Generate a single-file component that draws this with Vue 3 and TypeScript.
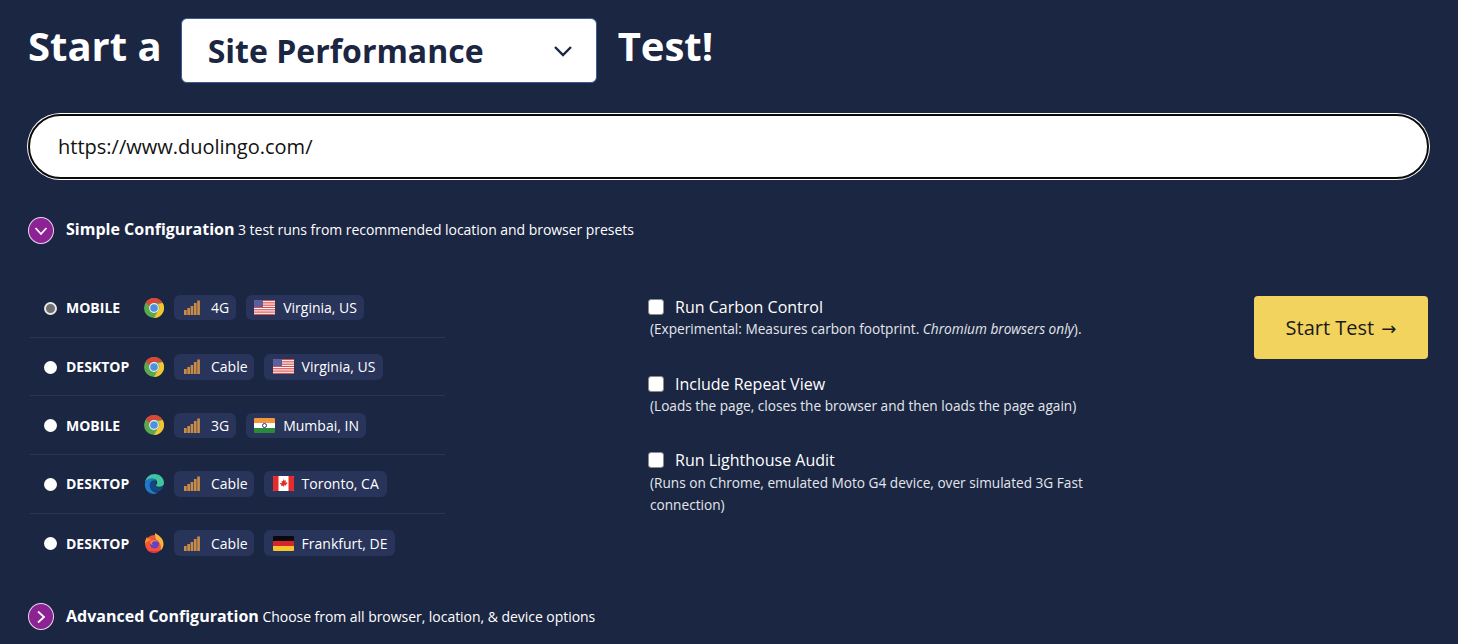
<script setup lang="ts">
type Row = { device: string; browser: 'chrome' | 'edge' | 'firefox'; net: string; flag: 'us' | 'in' | 'ca' | 'de'; place: string; checked?: boolean };
const rows: Row[] = [
  { device: 'MOBILE', browser: 'chrome', net: '4G', flag: 'us', place: 'Virginia, US', checked: true },
  { device: 'DESKTOP', browser: 'chrome', net: 'Cable', flag: 'us', place: 'Virginia, US' },
  { device: 'MOBILE', browser: 'chrome', net: '3G', flag: 'in', place: 'Mumbai, IN' },
  { device: 'DESKTOP', browser: 'edge', net: 'Cable', flag: 'ca', place: 'Toronto, CA' },
  { device: 'DESKTOP', browser: 'firefox', net: 'Cable', flag: 'de', place: 'Frankfurt, DE' },
];
const bars = [5, 7, 9, 12, 14.5];
const stripes = [0, 2.3, 4.6, 6.9, 9.2, 11.5, 13.8];
</script>

<template>
  <main class="page">
    <h1 class="title">
      <span>Start a</span>
      <span class="select">
        <span>Site Performance</span>
        <svg class="caret" width="20" height="12" viewBox="0 0 20 12"><path d="M2 2l8 8 8-8" fill="none" stroke="#1b2642" stroke-width="2.400" /></svg>
      </span>
      <span>Test!</span>
    </h1>

    <div class="url"><span>https://www.duolingo.com/</span></div>

    <div class="section simple">
      <span class="toggle">
        <svg width="14" height="14" viewBox="0 0 14 14"><path d="M1.500 4l5.500 6 5.500-6" fill="none" stroke="#fff" stroke-width="1.800" /></svg>
      </span>
      <p><b>Simple Configuration</b> 3 test runs from recommended location and browser presets</p>
    </div>

    <div class="options">
      <div class="presets">
        <label v-for="(r, i) in rows" :key="i" class="row" :class="{ desktop: r.device === 'DESKTOP' }">
          <input class="radio" type="radio" name="preset" :checked="r.checked" />
          <b class="device">{{ r.device }}</b>
          <svg v-if="r.browser === 'chrome'" class="browser" viewBox="0 0 20 20">
            <circle cx="10" cy="10" r="10" fill="#5aa84f" />
            <path d="M10 0a10 10 0 0 1 8.700 5H10a5 5 0 0 0-4.600 3L1.600 4.600A10 10 0 0 1 10 0z" fill="#d8473a" />
            <path d="M18.700 5a10 10 0 0 1-8.700 15l4.300-7.500A5 5 0 0 0 14 6.200z" fill="#f2c531" />
            <circle cx="10" cy="10" r="4.900" fill="#e8eef5" />
            <circle cx="10" cy="10" r="3.800" fill="#4f8fdc" />
          </svg>
          <svg v-else-if="r.browser === 'edge'" class="browser" viewBox="0 0 20 20">
            <path d="M1 8.500C2 3 6 0 10.500 0 16 0 20 4 20 9c0 2.500-2 3.800-4.500 3.800-2 0-3.500-.6-3.500-1.600 0-.8 1.200-1 1.200-2.700C13.200 6 11 4.500 8 4.800 4.500 5.200 1.800 6.500 1 8.500z" fill="#3fc5a0" />
            <path d="M1 8.500C2 5.500 5 4.200 8 4.500c2 .2 4 1.300 4.300 2.500-3-1.200-6.500.5-6.500 4.200 0 4 4 8 8.200 7.300A10 10 0 0 1 10 20C4 20 0 15 1 8.500z" fill="#1f78c8" />
            <path d="M5.800 11.200c0-2.600 3-4.600 6-4 .6 1-.2 2-.2 3 0 2 2 3 4 3 1.600 0 3.200-.6 4.200-1.800-.5 2.800-3 5.600-5.800 6.300-4.200.7-8.200-2.500-8.200-6.500z" fill="#14467f" />
          </svg>
          <svg v-else class="browser" viewBox="0 0 20 20">
            <circle cx="10" cy="11" r="9" fill="#f0562f" />
            <path d="M11 0c5 3 8.500 6 8.500 11 0 2-1 5-3 6.500C18 13 16 9 12 7c0-2.500-1.500-4-1-7z" fill="#fcb53b" />
            <path d="M1 11C1 8 1.500 6 3 4l1 2c1-.5 2-.5 3 0-1 2-4 2-6 5z" fill="#ff8a30" />
            <circle cx="10.500" cy="11" r="4.500" fill="#6a3fc8" />
            <path d="M6 9c2-3 6-3 8 0-2-1-5-1-6 1-.5 1 .5 2 2 2-2 .5-4-1-4-3z" fill="#f7823a" />
            <path d="M3 17c3 3 9 4 13 .5-4 1-10 1-13-.5z" fill="#e3265f" />
          </svg>
          <span class="pill">
            <svg class="bars" viewBox="0 0 16 15">
              <rect v-for="(h, b) in bars" :key="b" :x="b * 3.3" :y="15 - h" width="2.700" :height="h" fill="#c88c48" />
            </svg>
            <span>{{ r.net }}</span>
          </span>
          <span class="pill place">
            <svg class="flag" viewBox="0 0 21 15">
              <template v-if="r.flag === 'us'">
                <rect width="21" height="15" rx="1" fill="#fff" />
                <rect v-for="y in stripes" :key="y" :y="y" width="21" height="1.150" fill="#d94a4a" />
                <rect width="9" height="7" fill="#5b5f9e" />
              </template>
              <template v-else-if="r.flag === 'in'">
                <rect width="21" height="5" fill="#f4963a" />
                <rect y="5" width="21" height="5" fill="#fff" />
                <rect y="10" width="21" height="5" fill="#2a8a3a" />
                <circle cx="10.500" cy="7.500" r="2" fill="none" stroke="#1f2f8a" stroke-width="1" />
              </template>
              <template v-else-if="r.flag === 'ca'">
                <rect width="21" height="15" fill="#fff" />
                <rect width="5.500" height="15" fill="#e62b2b" />
                <rect x="15.500" width="5.500" height="15" fill="#e62b2b" />
                <path d="M10.500 3l1 1.800 1.500-.5-.5 2.500 1.500-.5.500 1-1.500 1.300.3 1-2.300-.3v1.700h-.5V9.800l-2.300.3.300-1L7 7.800l.5-1 1.500.5-.5-2.500 1.500.5z" fill="#e62b2b" />
              </template>
              <template v-else>
                <rect width="21" height="5" fill="#0a0a0a" />
                <rect y="5" width="21" height="5" fill="#d8232a" />
                <rect y="10" width="21" height="5" fill="#f5c62c" />
              </template>
            </svg>
            <span>{{ r.place }}</span>
          </span>
        </label>
      </div>

      <div class="checks">
        <div class="check">
          <label><input type="checkbox" /><span>Run Carbon Control</span></label>
          <small>(Experimental: Measures carbon footprint. <em>Chromium browsers only</em>).</small>
        </div>
        <div class="check">
          <label><input type="checkbox" /><span>Include Repeat View</span></label>
          <small>(Loads the page, closes the browser and then loads the page again)</small>
        </div>
        <div class="check">
          <label><input type="checkbox" /><span>Run Lighthouse Audit</span></label>
          <small>(Runs on Chrome, emulated Moto G4 device, over simulated 3G Fast connection)</small>
        </div>
      </div>

      <button class="start" type="button">Start Test <span class="arrow">→</span></button>
    </div>

    <div class="section advanced">
      <span class="toggle">
        <svg width="14" height="14" viewBox="0 0 14 14"><path d="M4 1.500l6 5.500-6 5.500" fill="none" stroke="#fff" stroke-width="1.800" /></svg>
      </span>
      <p><b>Advanced Configuration</b> Choose from all browser, location, &amp; device options</p>
    </div>
  </main>
</template>

<style scoped>
.page {
  box-sizing: border-box;
  height: 644px;
  overflow: hidden;
  padding: 18px 28px 0 27px;
  background: #1b2642;
  color: #fff;
  font-family: "Open Sans", "Liberation Sans", sans-serif;
}
.title {
  display: flex;
  align-items: flex-start;
  gap: 19px;
  margin: 0;
  padding-left: 1px;
  font-size: 40px;
  font-weight: 700;
  line-height: 56px;
}
.select {
  box-sizing: border-box;
  display: flex;
  align-items: center;
  justify-content: space-between;
  width: 416px;
  height: 65px;
  margin-right: 2px;
  padding: 0 23px 0 26px;
  background: #fff;
  border: 1px solid #3f5a94;
  border-radius: 6px;
  color: #1b2642;
  font-size: 32px;
  line-height: 65px;
}
.url {
  box-sizing: border-box;
  display: flex;
  align-items: center;
  height: 65px;
  margin: 31px 1px 0;
  padding: 0 28px;
  background: #fff;
  border: 2px solid #0b0b0b;
  border-radius: 33px;
  box-shadow: 0 0 0 1px #fff;
  color: #111;
  font-size: 20px;
}
.section {
  display: flex;
  align-items: center;
  gap: 12px;
  padding-left: 1px;
}
.section p {
  margin: 0 0 2px;
  font-size: 14px;
  letter-spacing: -0.04px;
  line-height: 25px;
}
.section b {
  font-size: 16px;
  letter-spacing: 0;
}
.simple {
  margin-top: 38px;
}
.advanced {
  margin-top: 31px;
}
.advanced p {
  margin-bottom: 0;
}
.toggle {
  box-sizing: border-box;
  display: flex;
  align-items: center;
  justify-content: center;
  width: 26px;
  height: 27px;
  background: #8c2293;
  border: 1px solid #e6d6ea;
  border-radius: 50%;
}
.options {
  display: flex;
  align-items: flex-start;
  margin-top: 35px;
}
.presets {
  flex: none;
  width: 415px;
  margin-left: 3px;
}
.row {
  box-sizing: border-box;
  display: flex;
  align-items: center;
  height: 58.700px;
  padding-left: 14px;
  border-bottom: 1px solid #2b3555;
}
.row:last-child {
  border-bottom: 0;
}
.radio {
  appearance: none;
  box-sizing: border-box;
  flex: none;
  width: 13px;
  height: 13px;
  margin: 1px 0 0;
  background: #fff;
  border-radius: 50%;
}
.radio:checked {
  background: #6f6f6f;
  border: 2px solid #e8e8e8;
}
.device {
  width: 78px;
  margin-left: 9px;
  font-size: 14px;
}
.browser {
  flex: none;
  width: 20px;
  height: 20px;
  margin-right: 10px;
}
.pill {
  display: flex;
  align-items: center;
  gap: 11px;
  height: 25px;
  padding: 0 7px 0 10px;
  background: #29345a;
  border-radius: 6px;
  font-size: 14px;
}
.place {
  gap: 8px;
  margin-left: 10px;
  padding: 0 7px 0 8px;
}
.desktop .pill {
  height: 26px;
  padding: 0 6px 0 10px;
}
.desktop .place {
  padding: 0 8px 0 9px;
}
.bars {
  flex: none;
  width: 16px;
  height: 15px;
}
.flag {
  flex: none;
  width: 21px;
  height: 15px;
  border-radius: 1px;
}
.checks {
  flex: none;
  width: 460px;
  margin-left: 204px;
  padding-top: 17px;
}
.check {
  height: 76.500px;
}
.check label {
  display: flex;
  align-items: center;
  gap: 11px;
  height: 22px;
  margin-left: -1px;
  font-size: 16px;
}
.check input {
  appearance: none;
  flex: none;
  width: 16px;
  height: 16px;
  margin: 0;
  background: #fff;
  border: 1px solid #8a8a8a;
  border-radius: 3px;
  box-sizing: border-box;
}
.check small {
  display: block;
  width: 440px;
  margin-left: 1px;
  color: #e4e6ec;
  font-size: 13.650px;
  line-height: 22px;
}
.check:last-child small {
  margin-top: 1px;
}
.start {
  flex: none;
  width: 174px;
  height: 63px;
  margin: 17px 2px 0 auto;
  background: #f2d35e;
  border: 0;
  border-radius: 4px;
  color: #1a1a1a;
  font-family: inherit;
  font-size: 20px;
}
.arrow {
  margin-left: 2px;
  font-family: "DejaVu Sans", sans-serif;
  font-size: 18px;
}
</style>

<style>
body {
  background: #1b2642;
}
</style>
